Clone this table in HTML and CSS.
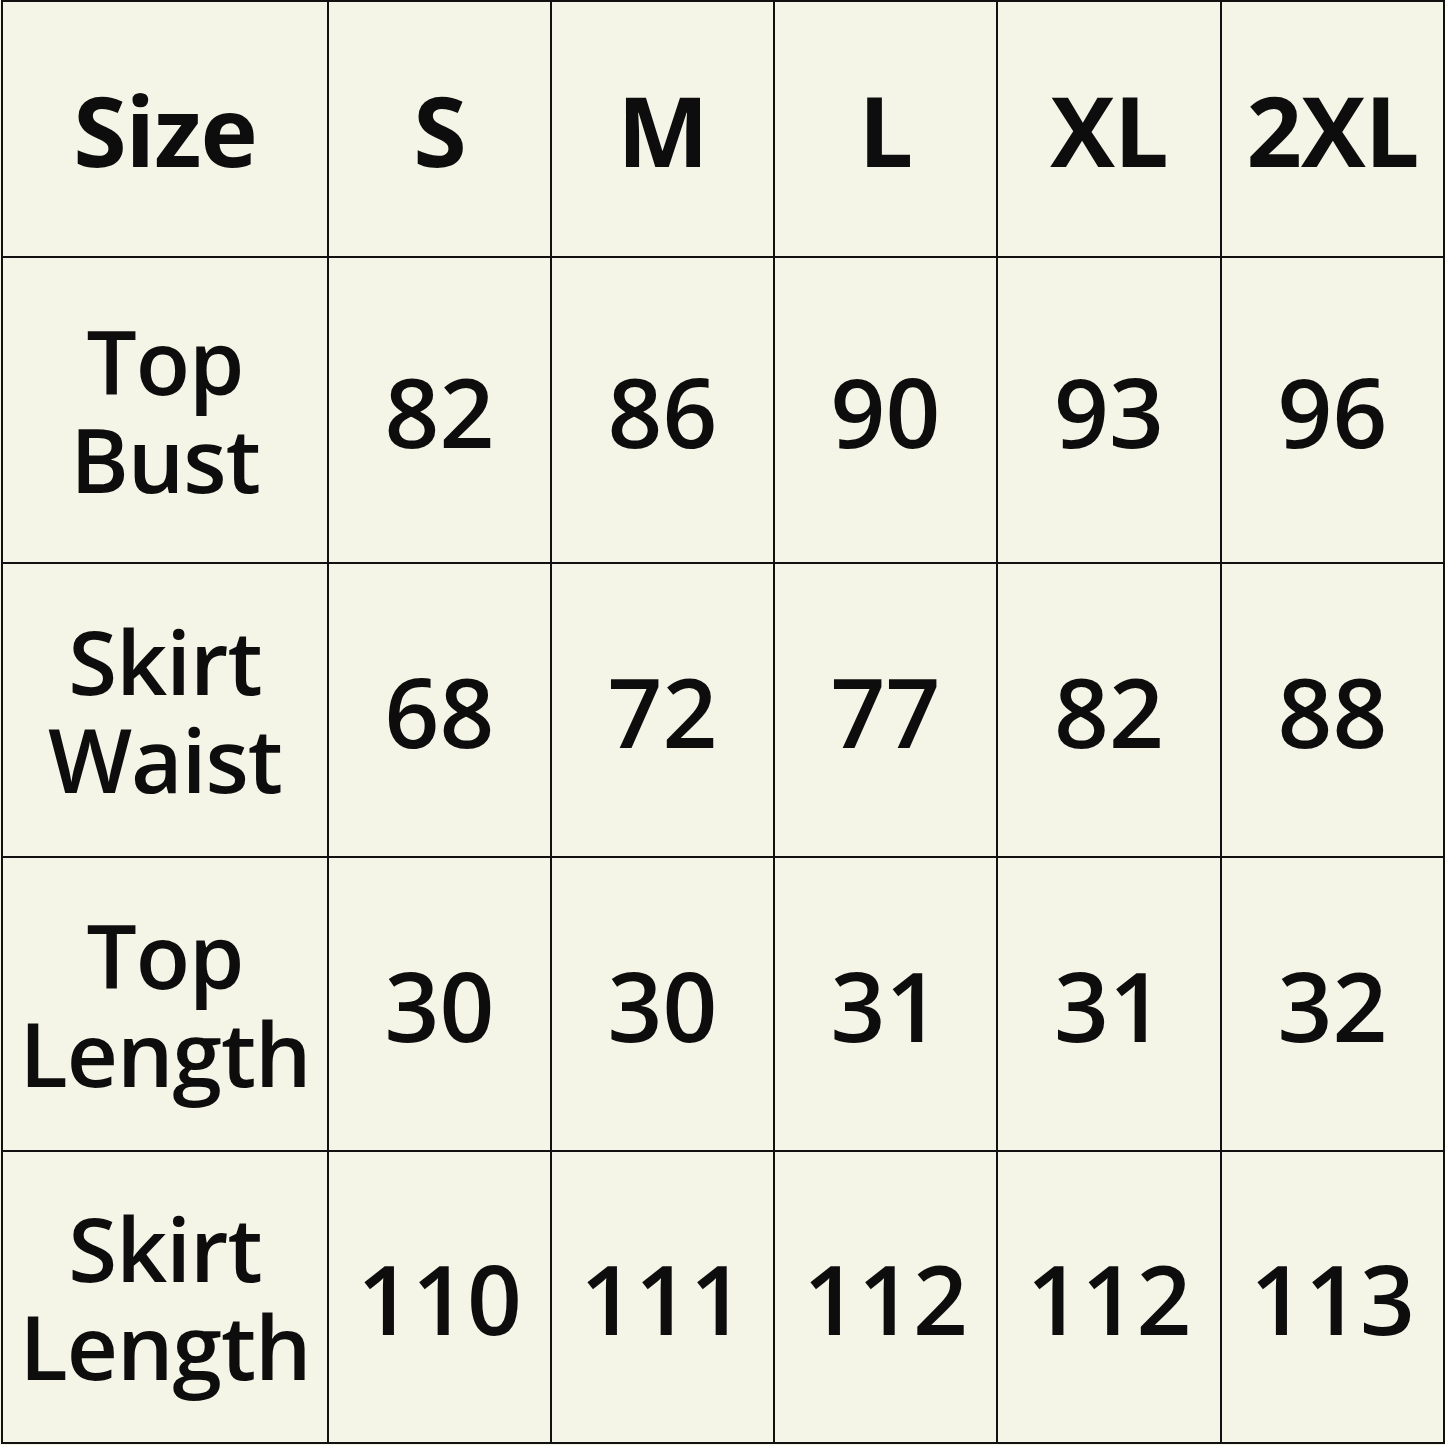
FILE: index.html
```html
<!DOCTYPE html>
<html lang="en">
<head>
<meta charset="utf-8">
<title>Size Chart</title>
<link rel="stylesheet" href="styles.css">
</head>
<body>
<div class="chart">
  <div class="cell head">Size</div>
  <div class="cell head">S</div>
  <div class="cell head">M</div>
  <div class="cell head">L</div>
  <div class="cell head">XL</div>
  <div class="cell head">2XL</div>

  <div class="cell label">Top<br>Bust</div>
  <div class="cell num">82</div>
  <div class="cell num">86</div>
  <div class="cell num">90</div>
  <div class="cell num">93</div>
  <div class="cell num">96</div>

  <div class="cell label">Skirt<br>Waist</div>
  <div class="cell num">68</div>
  <div class="cell num">72</div>
  <div class="cell num">77</div>
  <div class="cell num">82</div>
  <div class="cell num">88</div>

  <div class="cell label">Top<br>Length</div>
  <div class="cell num">30</div>
  <div class="cell num">30</div>
  <div class="cell num">31</div>
  <div class="cell num">31</div>
  <div class="cell num">32</div>

  <div class="cell label">Skirt<br>Length</div>
  <div class="cell num">110</div>
  <div class="cell num">111</div>
  <div class="cell num">112</div>
  <div class="cell num">112</div>
  <div class="cell num">113</div>
</div>
</body>
</html>
```

FILE: styles.css
```css
html, body {
  margin: 0;
  padding: 0;
  background: #f4f5e7;
}

.chart {
  margin-left: 1px;
  width: 1444px;
  display: grid;
  grid-template-columns: 324px 221px 221px 221px 222px 221px;
  grid-template-rows: 254px 304px 292px 292px 290px;
  gap: 2px;
  padding: 2px;
  box-sizing: border-box;
  background: #111;
  font-family: "Open Sans", "Noto Sans", sans-serif;
  color: #0d0d0d;
}

.cell {
  background: #f4f5e7;
  display: flex;
  align-items: center;
  justify-content: center;
  text-align: center;
}

.head {
  font-size: 97px;
  font-weight: 700;
  letter-spacing: -1px;
}

.label {
  font-size: 89px;
  font-weight: 600;
  line-height: 1.1;
  letter-spacing: -1px;
}

.num {
  font-size: 96px;
  font-weight: 600;
  letter-spacing: 0;
}
```
